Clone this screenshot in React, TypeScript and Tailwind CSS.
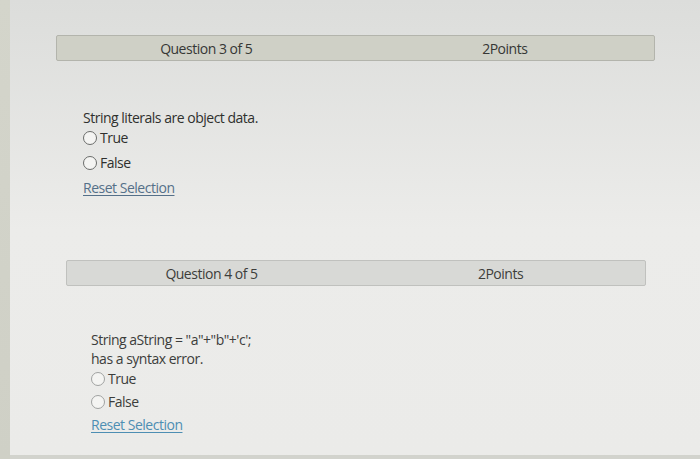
import React from 'react';

const Radio = ({ label, tone }: { label: string; tone: 'dark' | 'light' }) => (
  <label className="flex items-center gap-[3px]">
    <span
      className={
        tone === 'dark'
          ? 'w-[14px] h-[14px] rounded-full border-[1.5px] border-[#6a6c6a] bg-[#f4f4f2]'
          : 'w-[14px] h-[14px] rounded-full border-[1.5px] border-[#a0a2a1] bg-[#f4f4f2]'
      }
    />
    <span>{label}</span>
  </label>
);

export default function App() {
  return (
    <div
      className="w-[700px] h-[459px] overflow-hidden flex bg-gradient-to-b from-[#dcdddb] via-[#ececea] to-[#ebebe9] text-[#2f302e]"
      style={{ fontFamily: '"Open Sans", "Liberation Sans", sans-serif' }}
    >
      {/* kant links */}
      <div className="w-[10px] bg-gradient-to-b from-[#d4d5cb] to-[#cfd0c6]" />

      <div className="flex-1 flex flex-col text-[14px] tracking-[-0.035em]">
        {/* vraag 3 */}
        <div className="mt-[35px] ml-[46px] w-[599px] h-[26px] grid grid-cols-2 items-center rounded-[2px] border border-[#b3b4ac] bg-[#cfd0c6] text-[#363735]">
          <span className="text-center">Question 3 of 5</span>
          <span className="text-center">2Points</span>
        </div>

        <div className="ml-[73px] mt-[47px] flex flex-col">
          <div className="h-[19px] leading-[19px]">String literals are object data.</div>
          <div className="h-[21px] flex items-center">
            <Radio label="True" tone="dark" />
          </div>
          <div className="h-[21px] mt-[4px] flex items-center">
            <Radio label="False" tone="dark" />
          </div>
          <div className="h-[21px] mt-[4px] leading-[21px]">
            <a className="text-[#557089] underline underline-offset-2">Reset Selection</a>
          </div>
        </div>

        {/* vraag 4 */}
        <div className="mt-[62px] ml-[56px] w-[580px] h-[26px] grid grid-cols-2 items-center rounded-[2px] border border-[#c0c1be] bg-[#d8d9d6] text-[#3d3e3b]">
          <span className="text-center">Question 4 of 5</span>
          <span className="text-center">2Points</span>
        </div>

        <div className="ml-[81px] mt-[44px] flex flex-col text-[#3c3d3b]">
          <div className="h-[19px] leading-[19px]">String aString = "a"+"b"+'c';</div>
          <div className="h-[19px] leading-[19px]">has a syntax error.</div>
          <div className="h-[19px] mt-[1px] flex items-center">
            <Radio label="True" tone="light" />
          </div>
          <div className="h-[21px] mt-[3px] flex items-center">
            <Radio label="False" tone="light" />
          </div>
          <div className="h-[21px] mt-[2px] leading-[21px]">
            <a className="text-[#4d8eb3] underline underline-offset-2">Reset Selection</a>
          </div>
        </div>

        <div className="mt-auto h-[4px] bg-[#d2d3cd]" />
      </div>
    </div>
  );
}
